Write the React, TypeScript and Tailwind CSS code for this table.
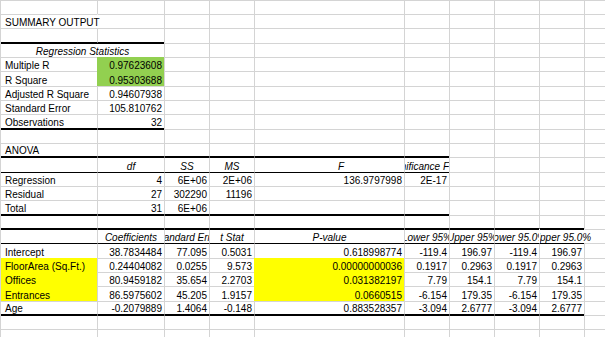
import React from 'react';

type Al = 'l' | 'r' | 'c' | 'F' | 'sig' | 'ovr' | 'lv';

interface RowDef {
  t?: (string | undefined)[];
  al?: Al[];
  it?: boolean;
  tb?: number;
  bb?: number;
  fillG?: number[];
  fillY?: number[];
  merged?: string;
  noLeft?: number[];
}

const WCLS = [
  'w-[96px]',
  'w-[67px]',
  'w-[45px]',
  'w-[45px]',
  'w-[150px]',
  'w-[45px]',
  'w-[45px]',
  'w-[45px]',
  'w-[45px]',
  'w-[45px]',
];

const ROWS: RowDef[] = [
  {},
  { t: ['SUMMARY OUTPUT'], al: ['lv'], noLeft: [1] },
  { bb: 2 },
  { merged: 'Regression Statistics', tb: 2 },
  { t: ['Multiple R', '0.97623608'], fillG: [1] },
  { t: ['R Square', '0.95303688'], fillG: [1] },
  { t: ['Adjusted R Square', '0.94607938'] },
  { t: ['Standard Error', '105.810762'] },
  { t: ['Observations', '32'], bb: 2 },
  { tb: 2 },
  { t: ['ANOVA'], bb: 6 },
  {
    t: ['', 'df', 'SS', 'MS', 'F', 'Significance F'],
    al: ['l', 'c', 'c', 'c', 'F', 'sig'],
    it: true,
    tb: 6,
  },
  { t: ['Regression', '4', '6E+06', '2E+06', '136.9797998', '2E-17'], tb: 6 },
  { t: ['Residual', '27', '302290', '11196'] },
  { t: ['Total', '31', '6E+06'], bb: 6 },
  { tb: 6, bb: 9 },
  {
    t: [
      '',
      'Coefficients',
      'Standard Error',
      't Stat',
      'P-value',
      'Lower 95%',
      'Upper 95%',
      'Lower 95.0%',
      'Upper 95.0%',
    ],
    al: ['l', 'c', 'c', 'c', 'c', 'c', 'c', 'c', 'ovr'],
    it: true,
    tb: 9,
    noLeft: [9],
  },
  {
    t: ['Intercept', '38.7834484', '77.095', '0.5031', '0.618998774', '-119.4', '196.97', '-119.4', '196.97'],
    tb: 9,
  },
  {
    t: ['FloorArea (Sq.Ft.)', '0.24404082', '0.0255', '9.573', '0.00000000036', '0.1917', '0.2963', '0.1917', '0.2963'],
    fillY: [0, 4],
  },
  {
    t: ['Offices', '80.9459182', '35.654', '2.2703', '0.031382197', '7.79', '154.1', '7.79', '154.1'],
    fillY: [0, 4],
  },
  {
    t: ['Entrances', '86.5975602', '45.205', '1.9157', '0.0660515', '-6.154', '179.35', '-6.154', '179.35'],
    fillY: [0, 4],
  },
  {
    t: ['Age', '-0.2079889', '1.4064', '-0.148', '0.883528357', '-3.094', '2.6777', '-3.094', '2.6777'],
    bb: 9,
  },
  { tb: 9 },
  {},
  {},
];

function alignCls(a: Al): string {
  switch (a) {
    case 'l':
      return 'justify-start pl-[4px] overflow-hidden';
    case 'lv':
      return 'justify-start pl-[4px] overflow-visible relative z-10';
    case 'r':
      return 'justify-end pr-[2px] overflow-hidden';
    case 'c':
      return 'justify-center overflow-hidden';
    case 'F':
      return 'justify-start pl-[83px] overflow-hidden';
    case 'sig':
      return 'justify-end overflow-hidden';
    case 'ovr':
      return 'justify-center overflow-visible [clip-path:inset(0_-60px_0_1px)]';
  }
}

function Row({ r, idx }: { r: RowDef; idx: number }) {
  const h = idx % 3 === 0 ? 'h-[15px]' : 'h-[14px]';
  const cells: React.ReactNode[] = [];
  const tb = r.tb ?? 0;
  const bb = r.bb ?? 0;

  if (r.merged) {
    cells.push(
      <div
        key="m"
        className="w-[163px] shrink-0 flex items-end justify-center overflow-hidden whitespace-nowrap border-t border-t-black"
      >
        <span className="leading-[11px] italic">{r.merged}</span>
      </div>
    );
  }

  for (let c = r.merged ? 2 : 0; c < 10; c++) {
    const text = r.t?.[c];
    const isG = r.fillG?.includes(c);
    const isY = r.fillY?.includes(c);
    const fill = isG || isY;
    const al: Al = r.al?.[c] ?? (c === 0 ? 'l' : 'r');
    const cls: string[] = ['shrink-0 flex items-end whitespace-nowrap', WCLS[c]];
    if (c > 0) {
      if (fill || r.noLeft?.includes(c)) cls.push('border-l border-l-transparent');
      else cls.push('border-l border-l-[#d4d4d4]');
    }
    if (c < tb) cls.push('border-t border-t-black');
    else if (fill) cls.push('border-t border-t-transparent');
    else cls.push('border-t border-t-[#d4d4d4]');
    if (c < bb) cls.push('border-b border-b-black');
    if (isG) cls.push('bg-[#92d050]');
    if (isY) cls.push('bg-[#ffff00]');
    cls.push(alignCls(al));
    cells.push(
      <div key={c} className={cls.join(' ')}>
        {text ? (
          <span className={r.it ? 'leading-[11px] italic' : 'leading-[11px]'}>{text}</span>
        ) : null}
      </div>
    );
  }

  return <div className={`flex ${h}`}>{cells}</div>;
}

export default function App() {
  return (
    <div className="w-[605px] h-[337px] overflow-hidden bg-white text-black text-[10px] font-['Liberation_Sans',Arial,sans-serif]">
      <div className="w-[629px] border-l border-l-[#d4d4d4]">
        {ROWS.map((r, i) => (
          <Row key={i} r={r} idx={i + 1} />
        ))}
      </div>
    </div>
  );
}
